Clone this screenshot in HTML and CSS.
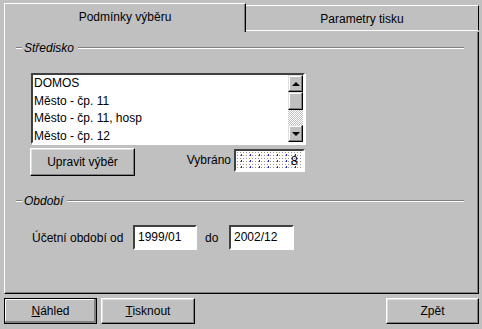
FILE: index.html
```html
<!DOCTYPE html>
<html lang="cs">
<head>
    <meta charset="UTF-8">
    <title>Tisk</title>
    <link rel="stylesheet" href="styles.css">
</head>
<body>
<div class="window">
    <div class="tabs">
        <div class="tab tabActive">Podmínky výběru</div>
        <div class="tab">Parametry tisku</div>
    </div>
    <div class="panel">
        <div class="legend">
            <span class="dash"></span>
            <span class="legendText">Středisko</span>
            <span class="rule"></span>
        </div>
        <div class="listBox">
            <div class="items">
                <div class="item">DOMOS</div>
                <div class="item">Město - čp. 11</div>
                <div class="item">Město - čp. 11, hosp</div>
                <div class="item">Město - čp. 12</div>
            </div>
            <div class="scrollBar">
                <div class="sbButton"><span class="arrowUp"></span></div>
                <div class="sbThumb"></div>
                <div class="sbTrack"></div>
                <div class="sbButton"><span class="arrowDown"></span></div>
            </div>
        </div>
        <div class="selectRow">
            <button type="button" class="btn btnEdit">Upravit výběr</button>
            <span class="selLabel">Vybráno</span>
            <div class="selBox">8</div>
        </div>
        <div class="legend legendSecond">
            <span class="dash"></span>
            <span class="legendText">Období</span>
            <span class="rule"></span>
        </div>
        <div class="periodRow">
            <span class="periodLabel">Účetní období od</span>
            <div class="field fieldFrom">1999/01</div>
            <span class="doLabel">do</span>
            <div class="field fieldTo">2002/12</div>
        </div>
    </div>
    <div class="bottomBar">
        <button type="button" class="btn btnBottom btnDefault"><u>N</u>áhled</button>
        <button type="button" class="btn btnBottom btnPrint"><u>T</u>isknout</button>
        <span class="spacer"></span>
        <button type="button" class="btn btnBottom btnBack">Zpět</button>
    </div>
</div>
</body>
</html>
```

FILE: styles.css
```css
* {
    box-sizing: border-box;
}

body {
    margin: 0;
    width: 482px;
    height: 329px;
    background-color: #c0c0c0;
    font-family: "Liberation Sans", Arial, sans-serif;
    font-size: 12px;
    color: #000;
    overflow: hidden;
}

.window {
    padding: 3px 3px 0 4px;
}

.tabs {
    display: flex;
    height: 29px;
}

.tab {
    flex: 1;
    margin-top: 2px;
    height: 26px;
    border-top: 1px solid #fff;
    border-right: 1px solid #000;
    border-bottom: 1px solid #fff;
    text-align: center;
    line-height: 24px;
    padding-top: 1px;
}

.tabActive {
    flex: none;
    width: 242px;
    margin-top: 0;
    height: 29px;
    border-left: 1px solid #fff;
    border-bottom: none;
    border-right: 1px solid #000;
    box-shadow: inset -1px 0 #808080;
    line-height: 26px;
    padding-top: 0;
}

.panel {
    height: 262px;
    border-left: 1px solid #fff;
    border-right: 1px solid #000;
    border-bottom: 1px solid #000;
    box-shadow: inset -1px -1px #808080;
    padding-top: 9px;
}

.legend {
    display: flex;
    align-items: center;
    height: 14px;
    margin: 0 14px 0 11px;
}

.legendSecond {
    margin-top: 18px;
}

.dash,
.rule {
    height: 2px;
    border-top: 1px solid #808080;
    border-bottom: 1px solid #fff;
}

.dash {
    width: 6px;
}

.rule {
    flex: 1;
}

.legendText {
    font-style: italic;
    padding: 0 4px 0 2px;
}

.listBox {
    display: flex;
    width: 274px;
    height: 71px;
    margin: 18px 0 0 26px;
    background-color: #fff;
    border-style: solid;
    border-width: 2px;
    border-color: #404040 #fff #fff #404040;
    box-shadow: 1px 1px #fff;
}

.items {
    flex: 1;
    padding-left: 1px;
}

.item {
    height: 17.5px;
    line-height: 17px;
    white-space: nowrap;
}

.scrollBar {
    width: 15px;
    display: flex;
    flex-direction: column;
}

.sbButton,
.sbThumb {
    height: 17px;
    background-color: #c0c0c0;
    border: 1px solid;
    border-color: #dfdfdf #000 #000 #dfdfdf;
    box-shadow: inset -1px -1px #808080, inset 1px 1px #fff;
    display: flex;
    align-items: center;
    justify-content: center;
}

.sbThumb {
    height: 18px;
}

.sbTrack {
    flex: 1;
    background-color: #fff;
    background-image: repeating-conic-gradient(#c0c0c0 0 25%, #fff 0 50%);
    background-size: 2px 2px;
}

.arrowUp,
.arrowDown {
    width: 0;
    height: 0;
    border-left: 4px solid transparent;
    border-right: 4px solid transparent;
}

.arrowUp {
    border-bottom: 4px solid #000;
}

.arrowDown {
    border-top: 4px solid #000;
}

.btn {
    font-family: inherit;
    font-size: 12px;
    color: #000;
    background-color: #c0c0c0;
    border: 1px solid;
    border-color: #fff #000 #000 #fff;
    box-shadow: inset -1px -1px #808080, inset 1px 1px #dfdfdf;
    padding: 0;
    margin: 0;
}

.selectRow {
    display: flex;
    align-items: flex-start;
    width: 275px;
    margin: 4px 0 0 25px;
}

.btnEdit {
    width: 105px;
    height: 28px;
}

.selLabel {
    margin-left: auto;
    margin-right: 3px;
    line-height: 24px;
}

.selBox {
    width: 71px;
    height: 23px;
    margin-top: 1px;
    text-align: right;
    padding-right: 5px;
    line-height: 19px;
    font-size: 13px;
    border-style: solid;
    border-width: 2px;
    border-color: #404040 #fff #fff #404040;
    background-color: #fff;
    background-image:
        radial-gradient(circle, #2020e0 0.6px, transparent 0.9px),
        radial-gradient(circle, #909090 0.6px, transparent 0.9px);
    background-size: 9px 6px, 3px 3px;
    background-position: 1px 1px, 0 0;
}

.periodRow {
    display: flex;
    align-items: center;
    margin: 17px 0 0 27px;
}

.periodLabel {
    width: 101px;
}

.field {
    height: 25px;
    line-height: 21px;
    padding-left: 3px;
    background-color: #fff;
    border-style: solid;
    border-width: 2px;
    border-color: #404040 #fff #fff #404040;
}

.fieldFrom {
    width: 64px;
}

.doLabel {
    width: 32px;
    padding-left: 8px;
}

.fieldTo {
    width: 65px;
}

.bottomBar {
    display: flex;
    margin-top: 4px;
}

.btnBottom {
    width: 93px;
    height: 26px;
}

.btnDefault {
    border-color: #000;
    box-shadow: inset -2px -2px #808080, inset 1px 1px #fff;
}

.btnPrint {
    width: 94px;
    margin-left: 4px;
}

.spacer {
    flex: 1;
}
```
